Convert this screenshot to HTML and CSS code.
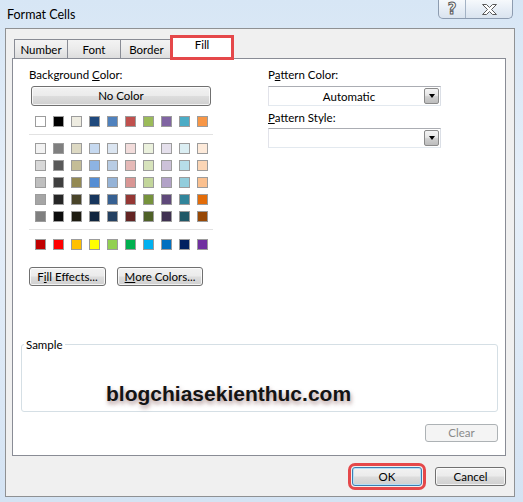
FILE: index.html
```html
<!DOCTYPE html>
<html>
<head>
<meta charset="utf-8">
<link rel="stylesheet" href="styles.css">
</head>
<body>
<div class="window">
  <div class="titlebar">
    <span class="title">Format Cells</span>
    <div class="caption">
      <span class="cbtn help">?</span>
      <span class="cbtn close">
        <svg width="15" height="11" viewBox="0 0 15 11"><path d="M0.5 0.5 H4.5 L7.5 3.5 L10.5 0.5 H14.5 L9.5 5.5 L14.5 10.5 H10.5 L7.5 7.5 L4.5 10.5 H0.5 L5.5 5.5 Z" fill="#fff" stroke="#5a5a5a" stroke-width="1"/></svg>
      </span>
    </div>
  </div>
  <div class="client">
    <div class="tabs">
      <div class="tab t-number">Number</div>
      <div class="tab t-font">Font</div>
      <div class="tab t-border">Border</div>
      <div class="tab t-fill active">Fill</div>
    </div>
    <div class="panel">
      <div class="top">
        <div class="left">
          <div class="label">Background <u>C</u>olor:</div>
          <div class="btn nocolor">No Color</div>
          <div class="swatches row0">
            <span class="sw" style="background:#FFFFFF"></span>
            <span class="sw" style="background:#000000"></span>
            <span class="sw" style="background:#EEECE1"></span>
            <span class="sw" style="background:#1F497D"></span>
            <span class="sw" style="background:#4F81BD"></span>
            <span class="sw" style="background:#C0504D"></span>
            <span class="sw" style="background:#9BBB59"></span>
            <span class="sw" style="background:#8064A2"></span>
            <span class="sw" style="background:#4BACC6"></span>
            <span class="sw" style="background:#F79646"></span>
          </div>
          <div class="sep"></div>
          <div class="swatches tints">
            <span class="sw" style="background:#F2F2F2"></span>
            <span class="sw" style="background:#7F7F7F"></span>
            <span class="sw" style="background:#DDD9C3"></span>
            <span class="sw" style="background:#C6D9F0"></span>
            <span class="sw" style="background:#DBE5F1"></span>
            <span class="sw" style="background:#F2DCDB"></span>
            <span class="sw" style="background:#EBF1DD"></span>
            <span class="sw" style="background:#E5E0EC"></span>
            <span class="sw" style="background:#DBEEF3"></span>
            <span class="sw" style="background:#FDEADA"></span>

            <span class="sw" style="background:#D8D8D8"></span>
            <span class="sw" style="background:#595959"></span>
            <span class="sw" style="background:#C4BD97"></span>
            <span class="sw" style="background:#8DB3E2"></span>
            <span class="sw" style="background:#B8CCE4"></span>
            <span class="sw" style="background:#E5B9B7"></span>
            <span class="sw" style="background:#D7E3BC"></span>
            <span class="sw" style="background:#CCC1D9"></span>
            <span class="sw" style="background:#B7DDE8"></span>
            <span class="sw" style="background:#FBD5B5"></span>

            <span class="sw" style="background:#BFBFBF"></span>
            <span class="sw" style="background:#3F3F3F"></span>
            <span class="sw" style="background:#938953"></span>
            <span class="sw" style="background:#548DD4"></span>
            <span class="sw" style="background:#95B3D7"></span>
            <span class="sw" style="background:#D99694"></span>
            <span class="sw" style="background:#C3D69B"></span>
            <span class="sw" style="background:#B2A2C7"></span>
            <span class="sw" style="background:#92CDDC"></span>
            <span class="sw" style="background:#FAC08F"></span>

            <span class="sw" style="background:#A5A5A5"></span>
            <span class="sw" style="background:#262626"></span>
            <span class="sw" style="background:#494429"></span>
            <span class="sw" style="background:#17365D"></span>
            <span class="sw" style="background:#366092"></span>
            <span class="sw" style="background:#953734"></span>
            <span class="sw" style="background:#76923C"></span>
            <span class="sw" style="background:#5F497A"></span>
            <span class="sw" style="background:#31859B"></span>
            <span class="sw" style="background:#E36C09"></span>

            <span class="sw" style="background:#7F7F7F"></span>
            <span class="sw" style="background:#0C0C0C"></span>
            <span class="sw" style="background:#1D1B10"></span>
            <span class="sw" style="background:#0F243E"></span>
            <span class="sw" style="background:#244061"></span>
            <span class="sw" style="background:#632423"></span>
            <span class="sw" style="background:#4F6128"></span>
            <span class="sw" style="background:#3F3151"></span>
            <span class="sw" style="background:#205867"></span>
            <span class="sw" style="background:#974806"></span>
          </div>
          <div class="sep sep2"></div>
          <div class="swatches standard">
            <span class="sw" style="background:#C00000"></span>
            <span class="sw" style="background:#FF0000"></span>
            <span class="sw" style="background:#FFC000"></span>
            <span class="sw" style="background:#FFFF00"></span>
            <span class="sw" style="background:#92D050"></span>
            <span class="sw" style="background:#00B050"></span>
            <span class="sw" style="background:#00B0F0"></span>
            <span class="sw" style="background:#0070C0"></span>
            <span class="sw" style="background:#002060"></span>
            <span class="sw" style="background:#7030A0"></span>
          </div>
          <div class="actions">
            <div class="btn fill-effects">F<u>i</u>ll Effects...</div>
            <div class="btn more-colors"><u>M</u>ore Colors...</div>
          </div>
        </div>
        <div class="right">
          <div class="label">P<u>a</u>ttern Color:</div>
          <div class="combo">
            <span class="combo-value">Automatic</span>
            <span class="drop"><span class="arrow"></span></span>
          </div>
          <div class="label label2"><u>P</u>attern Style:</div>
          <div class="combo combo2">
            <span class="combo-value"></span>
            <span class="drop"><span class="arrow"></span></span>
          </div>
        </div>
      </div>
      <fieldset class="sample">
        <legend>Sample</legend>
        <div class="watermark">blogchiasekienthuc.com</div>
      </fieldset>
      <div class="clear-row">
        <div class="btn disabled clear">Clear</div>
      </div>
    </div>
    <div class="dialog-buttons">
      <div class="btn default ok">OK</div>
      <div class="btn cancel">Cancel</div>
    </div>
  </div>
</div>
</body>
</html>
```

FILE: styles.css
```css
* { box-sizing: border-box; }

html, body {
  margin: 0;
  padding: 0;
}

body {
  width: 523px;
  height: 502px;
  overflow: hidden;
  font-family: Lato, "Noto Sans", sans-serif;
  font-size: 11.5px;
  color: #000;
}

.window {
  width: 523px;
  height: 502px;
  padding-left: 5px;
  background: linear-gradient(180deg, #d7e6f5 0%, #e6eff9 40%, #d4e3f3 100%);
}

.titlebar {
  height: 28px;
  display: flex;
  justify-content: space-between;
  align-items: flex-start;
}

.title {
  font-size: 12.5px;
  line-height: 30px;
  margin-left: 2px;
}

.caption {
  display: flex;
  height: 19px;
  margin-right: 10px;
  border: 1px solid #8d9cb0;
  border-top: none;
  border-radius: 0 0 5px 5px;
  overflow: hidden;
  background: linear-gradient(180deg, #f6f9fc 0%, #e7eef6 50%, #dae4ef 100%);
}

.cbtn {
  display: flex;
  align-items: center;
  justify-content: center;
  height: 100%;
}

.help {
  width: 27px;
  border-right: 1px solid #a3b2c4;
  font-family: "DejaVu Sans", sans-serif;
  font-weight: bold;
  font-size: 15px;
  color: #fff;
  -webkit-text-stroke: 1px #5a5a5a;
  line-height: 1;
}

.close {
  width: 46px;
}

.client {
  width: 510px;
  height: 469px;
  border: 1px solid #8f9193;
  background: #f0f0f0;
  padding: 7px 8px 0 6px;
}

.tabs {
  display: flex;
  align-items: flex-end;
  height: 22px;
  padding-left: 2px;
  position: relative;
  z-index: 1;
}

.tab {
  height: 19px;
  border: 1px solid #898c95;
  border-bottom: none;
  background: linear-gradient(180deg, #f3f3f3 0%, #ebebeb 50%, #dddddd 100%);
  display: flex;
  align-items: center;
  justify-content: center;
  line-height: 1;
  padding-top: 1px;
}

.t-number { width: 54px; }
.t-font { width: 54px; margin-left: -1px; }
.t-border { width: 53px; margin-left: -1px; }

.t-fill {
  width: 62px;
  margin-left: -2px;
}

.tab.active {
  height: 23px;
  margin-bottom: -1px;
  background: #fff;
  padding-top: 0;
  padding-bottom: 6px;
  outline: 3px solid #e5484a;
  outline-offset: -2px;
}

.panel {
  width: 494px;
  height: 398px;
  border: 1px solid #898c95;
  background: #fff;
  padding-top: 8px;
}

.top {
  display: flex;
  padding-left: 16px;
}

.left {
  width: 185px;
}

.right {
  margin-left: 54px;
  width: 173px;
}

.label {
  height: 15px;
  line-height: 15px;
  white-space: nowrap;
}

.btn {
  display: flex;
  align-items: center;
  justify-content: center;
  border: 1px solid #707070;
  border-radius: 3px;
  background: linear-gradient(180deg, #f2f2f2 0%, #ebebeb 48%, #dddddd 52%, #cfcfcf 100%);
  box-shadow: inset 0 0 0 1px rgba(255,255,255,0.75);
  line-height: 1;
  white-space: nowrap;
}

.nocolor {
  margin: 4px 0 0 2px;
  width: 180px;
  height: 20px;
}

.swatches {
  display: grid;
  grid-template-columns: repeat(10, 11px);
  column-gap: 7px;
  row-gap: 6px;
  padding-left: 6px;
}

.sw {
  width: 11px;
  height: 11px;
  border: 1px solid #9c9c9c;
}

.row0 { margin-top: 10px; }

.sep {
  width: 184px;
  height: 1px;
  background: #e2e2e2;
  margin-top: 7px;
}

.tints { margin-top: 8px; }
.standard { margin-top: 9px; }

.actions {
  display: flex;
  gap: 11px;
  margin-top: 17px;
}

.fill-effects { width: 77px; height: 19px; }
.more-colors { width: 86px; height: 19px; }

.combo {
  margin-top: 4px;
  height: 20px;
  border: 1px solid #abadb3;
  border-right-color: #dbdfe6;
  border-bottom-color: #e3e9ef;
  border-left-color: #e2e3ea;
  display: flex;
  align-items: stretch;
  background: #fff;
}

.combo-value {
  flex: 1;
  display: flex;
  align-items: center;
  justify-content: center;
  padding-left: 6px;
}

.drop {
  width: 15px;
  margin: 1px;
  border: 1px solid #8a8a8a;
  border-radius: 2px;
  background: linear-gradient(180deg, #f4f4f4 0%, #e6e6e6 45%, #cfcfcf 55%, #bdbdbd 100%);
  display: flex;
  align-items: center;
  justify-content: center;
}

.arrow {
  width: 0;
  height: 0;
  border-left: 3.5px solid transparent;
  border-right: 3.5px solid transparent;
  border-top: 4px solid #000;
}

.label2 { margin-top: 4px; }
.combo2 { margin-top: 3px; }

.sample {
  margin: 51px 0 0 8px;
  padding: 0;
  width: 477px;
  height: 75px;
  border: 1px solid #d5dfe5;
  border-radius: 3px;
}

.sample legend {
  padding: 0 2px;
  margin-left: 2px;
  line-height: 15px;
}

.watermark {
  margin-top: 30px;
  padding-left: 84px;
  font-family: "Liberation Sans", Arial, sans-serif;
  font-weight: bold;
  font-size: 21px;
  line-height: 24px;
  color: #141414;
  text-shadow: 1px 3px 4px rgba(110, 60, 60, 0.55);
  white-space: nowrap;
}

.clear-row {
  display: flex;
  justify-content: flex-end;
  padding-right: 7px;
  margin-top: 12px;
}

.btn.disabled {
  border-color: #adb2b5;
  background: #f4f4f4;
  color: #8a8a8a;
  box-shadow: none;
}

.clear { width: 73px; height: 18px; }

.dialog-buttons {
  display: flex;
  justify-content: flex-end;
  gap: 13px;
  margin-top: 11px;
}

.ok {
  width: 70px;
  height: 19px;
  outline: 3px solid #e5484a;
  outline-offset: 1px;
}

.btn.default {
  border-color: #3c7fb1;
  box-shadow: inset 0 0 0 1px #b6e0f7;
}

.cancel { width: 71px; height: 19px; }
```
